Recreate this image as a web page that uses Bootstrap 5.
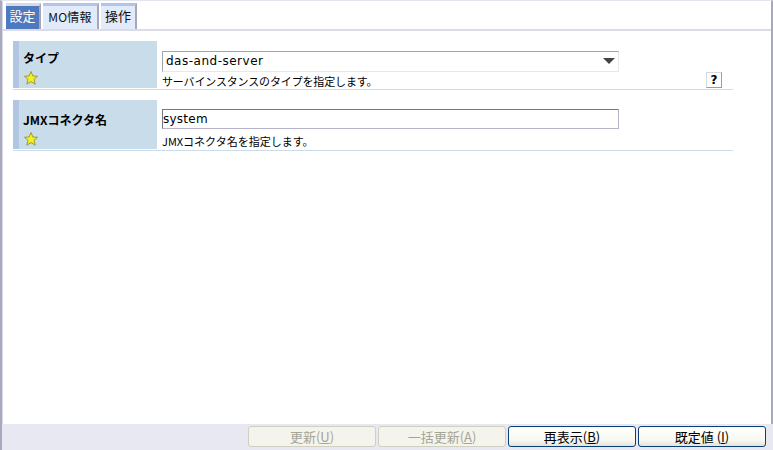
<!DOCTYPE html>
<html lang="ja">
<head>
<meta charset="utf-8">
<title>設定</title>
<link href="https://cdn.jsdelivr.net/npm/bootstrap@5.3.0/dist/css/bootstrap.min.css" rel="stylesheet">
<style>
html,body{height:450px;overflow:hidden;background:#fff}
body{font-family:"Noto Sans CJK JP","DejaVu Sans",sans-serif;font-size:12px;line-height:1;color:#000}
.shell{height:450px;border-left:2px solid #a9a9bd;box-shadow:inset 1px 0 0 #d8d8e6;border-top:1px solid #e4e4ee;border-right:2px solid #a9a9bd}
.tabbar{height:30px;padding:2px 0 0 3px;gap:2px;border-bottom:2px solid #dcdce8;margin-left:1px}
.tabitem{height:26px;font-size:13px;background:#e1ebfb;border-top:3px solid #b4c4e6;border-right:2px solid #a8a8b4;text-align:center;color:#111;padding-top:3px;margin-bottom:0}
.tabon{width:35px;background:#4e79bf;border-top-color:#d8d8e6;color:#fff}
.tabmo{width:56px;padding-top:5px;font-size:12px;letter-spacing:.2px}
.tabop{width:36px}
.formarea{padding:10px 0 0 11px;width:731px}
.fieldrow{border-bottom:1px solid #c9dcea;margin-bottom:10px;height:49px}
.fieldrow2{height:51px;margin-top:0}
.lblcell{width:144px;height:47px;background:#c9dcea;border-left:6px solid #b2c6e4;padding:11px 0 0 4px;font-weight:700;flex:none}
.fieldrow2 .lblcell{height:49px;padding-top:14px}
.lbltxt{height:15px;font-size:12px;display:block}
.fieldrow2 .lbltxt{height:14px}
.starico{display:block;margin-left:1px;margin-top:4px}
.valcell{padding:10px 0 0 5px;position:relative}
.fieldrow2 .valcell{padding-top:9px}
.sel{width:457px;height:21px;border:1px solid;border-color:#a4a4a8 #e8e8e8 #e8e8e8 #a4a4a8;padding:3px 0 0 3px;font-family:"DejaVu Sans",sans-serif;font-size:12px;position:relative;letter-spacing:.5px}
.sel::after{content:"";position:absolute;right:3px;top:6px;border-style:solid;border-width:6px 6px 0;border-color:#444 transparent transparent}
.txt{width:457px;height:20px;border:1px solid;border-color:#77777f #b8b4c8 #b8b4c8 #77777f;padding:3px 0 0 0;font-family:"DejaVu Sans",sans-serif;font-size:12px;letter-spacing:.25px}
.desc{font-size:11px;margin-top:4px;height:13px;letter-spacing:-.15px;white-space:nowrap}
.fieldrow2 .desc{margin-top:7px;letter-spacing:0}
.helpbtn{position:absolute;left:549px;top:31px;width:16px;height:16px;border:1px solid;border-color:#d8d8e0 #9a9aa8 #9a9aa8 #d8d8e0;font-weight:700;font-size:12px;text-align:center;line-height:14px;font-family:"DejaVu Sans",sans-serif}
.footbar{height:26px;background:#e8e8f3;margin-left:0;padding:2px 7px 0 0;margin-right:-2px;gap:2px}
.pbtn{width:128px;height:21px;font-size:13px;padding:0;line-height:18px;border-radius:3px;border:1px solid #0a3f78;background:linear-gradient(#fff 0,#f8f8f2 70%,#e6e4da 100%);color:#000;--bs-btn-disabled-opacity:1}
.pbtn:disabled{border-color:#cfcfc2;background:#f4f4ec;color:#a4a498;opacity:1}
.spacer{flex:1}
</style>
</head>
<body>
<div class="shell d-flex flex-column">
  <div class="tabbar d-flex flex-none">
    <div class="tabitem tabon">設定</div>
    <div class="tabitem tabmo">MO情報</div>
    <div class="tabitem tabop">操作</div>
  </div>
  <div class="formarea">
    <div class="fieldrow d-flex">
      <div class="lblcell"><span class="lbltxt">タイプ</span>
        <svg class="starico" width="14" height="14" viewBox="0 0 14 14"><polygon points="7,0.5 8.9,5 13.5,5.3 10,8.4 11.2,13.2 7,10.6 2.8,13.2 4,8.4 0.5,5.3 5.1,5" fill="#f6f01e" stroke="#9a9a3a"/></svg>
      </div>
      <div class="valcell flex-grow-1">
        <div class="sel">das-and-server</div>
        <div class="desc">サーバインスタンスのタイプを指定します。</div>
        <div class="helpbtn">?</div>
      </div>
    </div>
    <div class="fieldrow fieldrow2 d-flex">
      <div class="lblcell"><span class="lbltxt">JMXコネクタ名</span>
        <svg class="starico" width="14" height="14" viewBox="0 0 14 14"><polygon points="7,0.5 8.9,5 13.5,5.3 10,8.4 11.2,13.2 7,10.6 2.8,13.2 4,8.4 0.5,5.3 5.1,5" fill="#f6f01e" stroke="#9a9a3a"/></svg>
      </div>
      <div class="valcell flex-grow-1">
        <div class="txt">system</div>
        <div class="desc">JMXコネクタ名を指定します。</div>
      </div>
    </div>
  </div>
  <div class="spacer"></div>
  <div class="footbar d-flex justify-content-end">
    <button class="btn pbtn" disabled>更新(<u>U</u>)</button>
    <button class="btn pbtn" disabled>一括更新(<u>A</u>)</button>
    <button class="btn pbtn">再表示(<u>B</u>)</button>
    <button class="btn pbtn">既定値 (<u>I</u>)</button>
  </div>
</div>
</body>
</html>
